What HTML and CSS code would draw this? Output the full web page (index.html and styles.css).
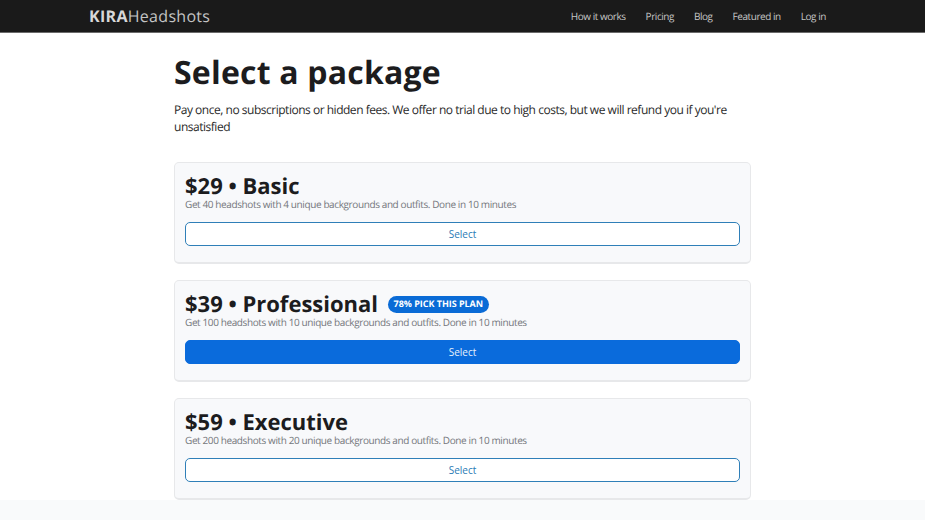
FILE: index.html
```html
<!DOCTYPE html>
<html lang="en">
<head>
<meta charset="utf-8">
<title>Select a package</title>
<link rel="stylesheet" href="styles.css">
</head>
<body>
<header class="topbar">
  <div class="topbar-inner">
    <a class="logo"><b>KIRA</b>Headshots</a>
    <nav class="nav">
      <a>How it works</a>
      <a>Pricing</a>
      <a>Blog</a>
      <a>Featured in</a>
      <a>Log in</a>
    </nav>
  </div>
</header>
<main class="main">
  <h1 class="title">Select a package</h1>
  <p class="lead">Pay once, no subscriptions or hidden fees. We offer no trial due to high costs, but we will refund you if you're unsatisfied</p>
  <section class="plans">
    <article class="plan">
      <div class="plan-head"><h2 class="plan-title">$29 • Basic</h2></div>
      <p class="plan-desc">Get 40 headshots with 4 unique backgrounds and outfits. Done in 10 minutes</p>
      <button class="btn">Select</button>
    </article>
    <article class="plan">
      <div class="plan-head"><h2 class="plan-title">$39 • Professional</h2><span class="badge">78% PICK THIS PLAN</span></div>
      <p class="plan-desc">Get 100 headshots with 10 unique backgrounds and outfits. Done in 10 minutes</p>
      <button class="btn btn-primary">Select</button>
    </article>
    <article class="plan">
      <div class="plan-head"><h2 class="plan-title">$59 • Executive</h2></div>
      <p class="plan-desc">Get 200 headshots with 20 unique backgrounds and outfits. Done in 10 minutes</p>
      <button class="btn">Select</button>
    </article>
  </section>
</main>
<footer class="footer"></footer>
</body>
</html>
```

FILE: styles.css
```css
* { box-sizing: border-box; }
html, body { margin: 0; padding: 0; height: 520px; overflow: hidden; }
body {
  font-family: "Open Sans", "Liberation Sans", sans-serif;
  color: #1c1c1e;
  background: #fff;
  display: flex;
  flex-direction: column;
  text-rendering: geometricPrecision;
}
.topbar {
  height: 33px;
  flex: none;
  background: #1a1a1a;
  border-bottom: 1px solid #6b6b6b;
}
.topbar-inner {
  height: 32px;
  padding: 0 99px 0 89px;
  display: flex;
  align-items: center;
  justify-content: space-between;
}
.logo {
  font-size: 16px;
  letter-spacing: 0.3px;
  color: #c4c4c4;
  line-height: 32px;
}
.logo b { font-weight: 700; color: #d8d8d8; }
.nav { display: flex; gap: 20px; }
.nav a {
  font-size: 10px;
  letter-spacing: -0.45px;
  color: #c6c6c6;
  line-height: 30px;
}
.main {
  flex: none;
  width: 577px;
  height: 467px;
  margin-left: 174px;
}
.title {
  margin: 16px 0 0;
  font-size: 32px;
  line-height: 48px;
  font-weight: 700;
  letter-spacing: 0.2px;
  color: #1c1c1e;
}
.lead {
  margin: 4px 0 0;
  font-size: 12px;
  line-height: 17px;
  letter-spacing: -0.48px;
  color: #2a2a2a;
}
.plans {
  margin-top: 27px;
  display: flex;
  flex-direction: column;
  gap: 16px;
}
.plan {
  height: 102px;
  padding: 12px 10px 0;
  background: #f8f9fb;
  border: 1px solid #e7e8ea;
  border-bottom-width: 2px;
  border-radius: 5px;
}
.plan-head {
  display: flex;
  align-items: center;
  gap: 10px;
  height: 22px;
}
.plan-title {
  margin: 0;
  font-size: 22px;
  line-height: 22px;
  font-weight: 700;
  letter-spacing: 0;
  color: #1c1c1e;
}
.badge {
  height: 17px;
  padding: 0 5.5px;
  border-radius: 9px;
  background: #0a6bd6;
  color: #fff;
  font-size: 9px;
  line-height: 16px;
  font-weight: 700;
  letter-spacing: -0.03px;
}
.plan-desc {
  margin: 0;
  font-size: 10px;
  line-height: 14px;
  letter-spacing: -0.39px;
  color: #74777c;
}
.btn {
  display: block;
  width: 100%;
  height: 24px;
  margin-top: 11px;
  padding: 0 0 1px;
  border: 1px solid #2f7fb8;
  border-radius: 5px;
  background: #fff;
  color: #2a7ab5;
  font-family: inherit;
  font-size: 10px;
  line-height: 20px;
}
.btn-primary {
  background: #0a6bdc;
  border-color: #0a6bdc;
  color: #e8f1fb;
}
.footer {
  flex: 1;
  background: #f9fafb;
}
```
